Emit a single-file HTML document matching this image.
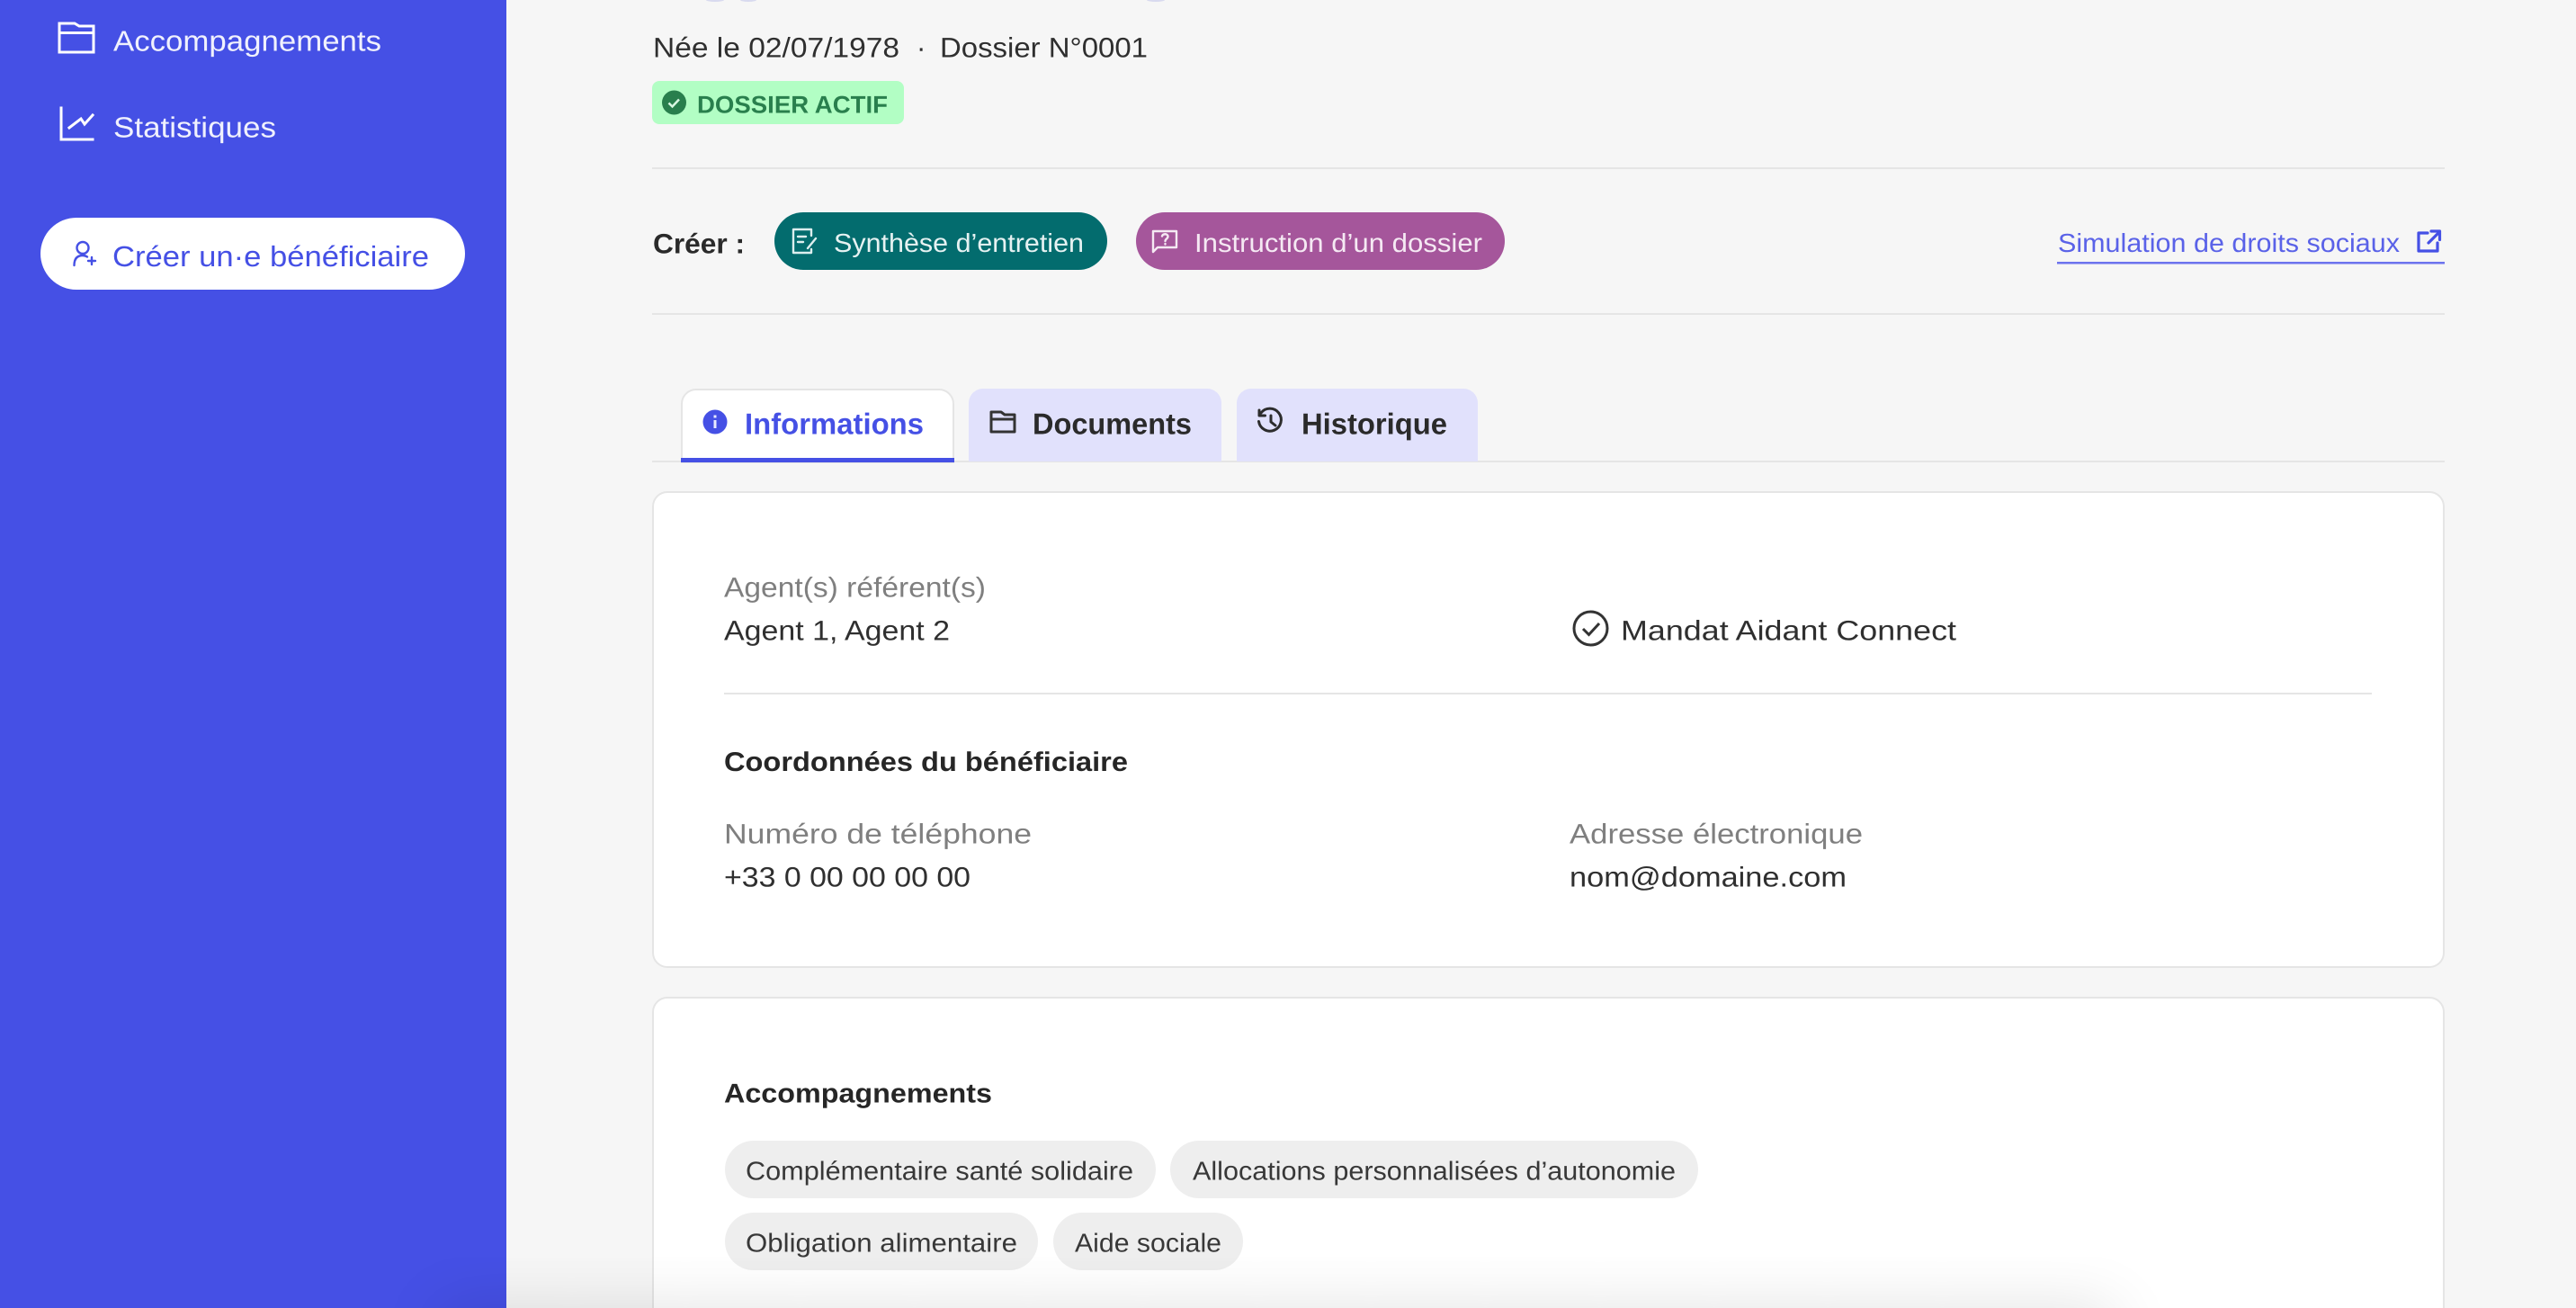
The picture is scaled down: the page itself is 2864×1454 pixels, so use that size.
<!DOCTYPE html>
<html lang="fr">
<head>
<meta charset="utf-8">
<title>Dossier bénéficiaire</title>
<style>
html,body{margin:0;padding:0;width:2864px;height:1454px;overflow:hidden;background:#f6f6f6}
#page{position:fixed;left:0;top:0;width:2864px;height:1454px;overflow:hidden;contain:strict}
svg{position:absolute;left:0;top:0;display:block}
text{font-family:"Liberation Sans",sans-serif;text-rendering:geometricPrecision}
.r{font-size:31px;fill:#2f2f2f}
.g{font-size:31px;fill:#7f7f7f}
.b{font-size:30px;font-weight:700;fill:#262626}
.p{font-size:29px;fill:#e6f2f2}
.c{font-size:29px;fill:#383838}
.t{font-size:33px;font-weight:700;fill:#2a2a2a}
.w{font-size:32px;fill:#f0f1fd}
.ic{fill:none;stroke-width:2.8;stroke-linecap:round;stroke-linejoin:round}
#fade{position:absolute;left:520px;top:1484px;width:1800px;height:30px;box-shadow:0 0 70px 30px rgba(0,0,0,.12)}
</style>
</head>
<body>
<div id="page">
<svg width="2864" height="1454" viewBox="0 0 2864 1454" xmlns="http://www.w3.org/2000/svg">
  <!-- backgrounds -->
  <rect x="0" y="0" width="2864" height="1454" fill="#f6f6f6"/>
  <rect x="0" y="0" width="563" height="1454" fill="#4550e5"/>

  <!-- clipped heading remains -->
  <ellipse cx="795" cy="0" rx="10" ry="2" fill="#d8daef"/>
  <ellipse cx="832" cy="0" rx="9" ry="2" fill="#d8daef"/>
  <ellipse cx="1285" cy="0" rx="10" ry="2" fill="#d8daef"/>

  <!-- sidebar -->
  <path class="ic" stroke="#fff" d="M66 26h17l5 3h16v29H66zM66 36.500h38" style="stroke-width:3;stroke-linecap:square;stroke-linejoin:miter"/>
  <text class="w" x="126" y="56.500" textLength="298" lengthAdjust="spacingAndGlyphs">Accompagnements</text>
  <path class="ic" stroke="#fff" d="M68 120V155H103M77 142L90 132L94 138L103 128" style="stroke-width:3;stroke-linecap:square;stroke-linejoin:miter"/>
  <text class="w" x="126" y="152.500" textLength="181" lengthAdjust="spacingAndGlyphs">Statistiques</text>
  <rect x="45" y="242" width="472" height="80" rx="40" fill="#fff"/>
  <g class="ic" stroke="#4550e5" style="stroke-width:2.400">
    <circle cx="92" cy="275.500" r="6.500"/>
    <path d="M82.500 295c0-7 3-11 9.500-11 2 0 3.500 .5 5 1.500M102 286v8M98 290h8"/>
  </g>
  <text x="125" y="296" font-size="32" fill="#4550e5" textLength="352" lengthAdjust="spacingAndGlyphs">Créer un·e bénéficiaire</text>

  <!-- header info -->
  <text class="r" x="726" y="63.500" textLength="274" lengthAdjust="spacingAndGlyphs">Née le 02/07/1978</text>
  <text class="r" x="1019" y="63.500">·</text>
  <text class="r" x="1045" y="63.500" textLength="231" lengthAdjust="spacingAndGlyphs">Dossier N°0001</text>
  <rect x="725" y="90" width="280" height="48" rx="8" fill="#b2fec4"/>
  <circle cx="749.500" cy="114" r="13.500" fill="#297f4d"/>
  <path d="M743.500 114.500l4 4 7.500-8" fill="none" stroke="#d9f7e2" stroke-width="2.500"/>
  <text x="775" y="125.500" font-size="27" font-weight="700" fill="#297f4d" textLength="212" lengthAdjust="spacingAndGlyphs">DOSSIER ACTIF</text>
  <rect x="725" y="186" width="1993" height="2" fill="#e5e5e5"/>

  <!-- actions -->
  <text x="726" y="281.500" font-size="31" font-weight="700" fill="#2a2a2a" textLength="102" lengthAdjust="spacingAndGlyphs">Créer :</text>
  <rect x="861" y="236" width="370" height="64" rx="32" fill="#036c6e"/>
  <g class="ic" stroke="#dceeee" style="stroke-width:2.400">
    <path d="M902 262v-7H882v26h20v-4"/>
    <path d="M887 263h9M887 269h6M898 276l9-11"/>
  </g>
  <text class="p" x="927" y="280" textLength="278" lengthAdjust="spacingAndGlyphs">Synthèse d’entretien</text>
  <rect x="1263" y="236" width="410" height="64" rx="32" fill="#a5569b"/>
  <g class="ic" stroke="#f5e9f3" style="stroke-width:2.400">
    <path d="M1282 257h26v18h-21l-5 5z"/>
    <path d="M1292 262.500c1-3 6-3 6.500 0 .5 2.500-3 3-3 5.500M1295.500 271v.5"/>
  </g>
  <text class="p" x="1328" y="280" textLength="320" lengthAdjust="spacingAndGlyphs" style="fill:#f5e9f3">Instruction d’un dossier</text>

  <text x="2288" y="280" font-size="29" fill="#5a62e8" textLength="380" lengthAdjust="spacingAndGlyphs">Simulation de droits sociaux</text>
  <g class="ic" stroke="#4550e5" style="stroke-width:3.200">
    <path d="M2699 259h-10v20h21v-9M2700 270l12-12M2703 257h9.500v9.500"/>
  </g>
  <rect x="2287" y="291" width="431" height="2.500" fill="#6c73ee"/>
  <rect x="725" y="348" width="1993" height="2" fill="#e5e5e5"/>

  <!-- tabs -->
  <rect x="725" y="512" width="1993" height="2" fill="#e5e5e5"/>
  <path d="M758 514V449a16 16 0 0 1 16-16h270a16 16 0 0 1 16 16v65z" fill="#fff" stroke="#e5e5e5" stroke-width="2"/>
  <rect x="757" y="509" width="304" height="5" fill="#4550e5"/>
  <circle cx="795" cy="469" r="13.500" fill="#4550e5"/>
  <rect x="793.500" y="467" width="3" height="9" fill="#e8eaff"/>
  <rect x="793.500" y="461.500" width="3" height="3" fill="#e8eaff"/>
  <text x="828" y="482.500" font-size="33" font-weight="700" fill="#4550e5" textLength="199" lengthAdjust="spacingAndGlyphs">Informations</text>

  <path d="M1077 513V448a16 16 0 0 1 16-16h249a16 16 0 0 1 16 16v65z" fill="#e1e1fc"/>
  <path class="ic" stroke="#333" d="M1102 458h11l4 3h11v19h-26zM1102 466h26" style="stroke-width:3"/>
  <text class="t" x="1148" y="482.500" textLength="177" lengthAdjust="spacingAndGlyphs">Documents</text>

  <path d="M1375 513V448a16 16 0 0 1 16-16h236a16 16 0 0 1 16 16v65z" fill="#e1e1fc"/>
  <g class="ic" stroke="#2c2c2c" style="stroke-width:3">
    <path d="M1402 459a12.500 12.500 0 1 1-2.500 9.500"/>
    <path d="M1400 456v6h6.500M1413 462v7l5 4"/>
  </g>
  <text class="t" x="1447" y="482.500" textLength="162" lengthAdjust="spacingAndGlyphs">Historique</text>

  <!-- card 1 -->
  <rect x="726" y="547" width="1991" height="528" rx="16" fill="#fff" stroke="#e5e5e5" stroke-width="2"/>
  <text class="g" x="805" y="663.500" textLength="291" lengthAdjust="spacingAndGlyphs">Agent(s) référent(s)</text>
  <text class="r" x="805" y="711.500" textLength="251" lengthAdjust="spacingAndGlyphs">Agent 1, Agent 2</text>
  <circle cx="1768.500" cy="698.500" r="18.500" fill="none" stroke="#333" stroke-width="3"/>
  <path d="M1760 699l6.500 6.500 11.500-12.500" fill="none" stroke="#333" stroke-width="3"/>
  <text class="r" x="1802" y="711.500" textLength="373" lengthAdjust="spacingAndGlyphs">Mandat Aidant Connect</text>
  <rect x="805" y="770" width="1832" height="2" fill="#e5e5e5"/>
  <text class="b" x="805" y="857" textLength="449" lengthAdjust="spacingAndGlyphs">Coordonnées du bénéficiaire</text>
  <text class="g" x="805" y="937.500" textLength="342" lengthAdjust="spacingAndGlyphs">Numéro de téléphone</text>
  <text class="r" x="805" y="985.500" textLength="274" lengthAdjust="spacingAndGlyphs">+33 0 00 00 00 00</text>
  <text class="g" x="1745" y="937.500" textLength="326" lengthAdjust="spacingAndGlyphs">Adresse électronique</text>
  <text class="r" x="1745" y="985.500" textLength="308" lengthAdjust="spacingAndGlyphs">nom@domaine.com</text>

  <!-- card 2 -->
  <rect x="726" y="1109" width="1991" height="400" rx="16" fill="#fff" stroke="#e5e5e5" stroke-width="2"/>
  <text class="b" x="805" y="1225.500" textLength="298" lengthAdjust="spacingAndGlyphs">Accompagnements</text>
  <rect x="806" y="1268" width="479" height="64" rx="32" fill="#eee"/>
  <text class="c" x="829" y="1311.500" textLength="431" lengthAdjust="spacingAndGlyphs">Complémentaire santé solidaire</text>
  <rect x="1301" y="1268" width="587" height="64" rx="32" fill="#eee"/>
  <text class="c" x="1326" y="1311.500" textLength="537" lengthAdjust="spacingAndGlyphs">Allocations personnalisées d’autonomie</text>
  <rect x="806" y="1348" width="348" height="64" rx="32" fill="#eee"/>
  <text class="c" x="829" y="1391.500" textLength="302" lengthAdjust="spacingAndGlyphs">Obligation alimentaire</text>
  <rect x="1171" y="1348" width="211" height="64" rx="32" fill="#eee"/>
  <text class="c" x="1195" y="1391.500" textLength="163" lengthAdjust="spacingAndGlyphs">Aide sociale</text>
</svg>
<div id="fade"></div>
</div>
</body>
</html>
